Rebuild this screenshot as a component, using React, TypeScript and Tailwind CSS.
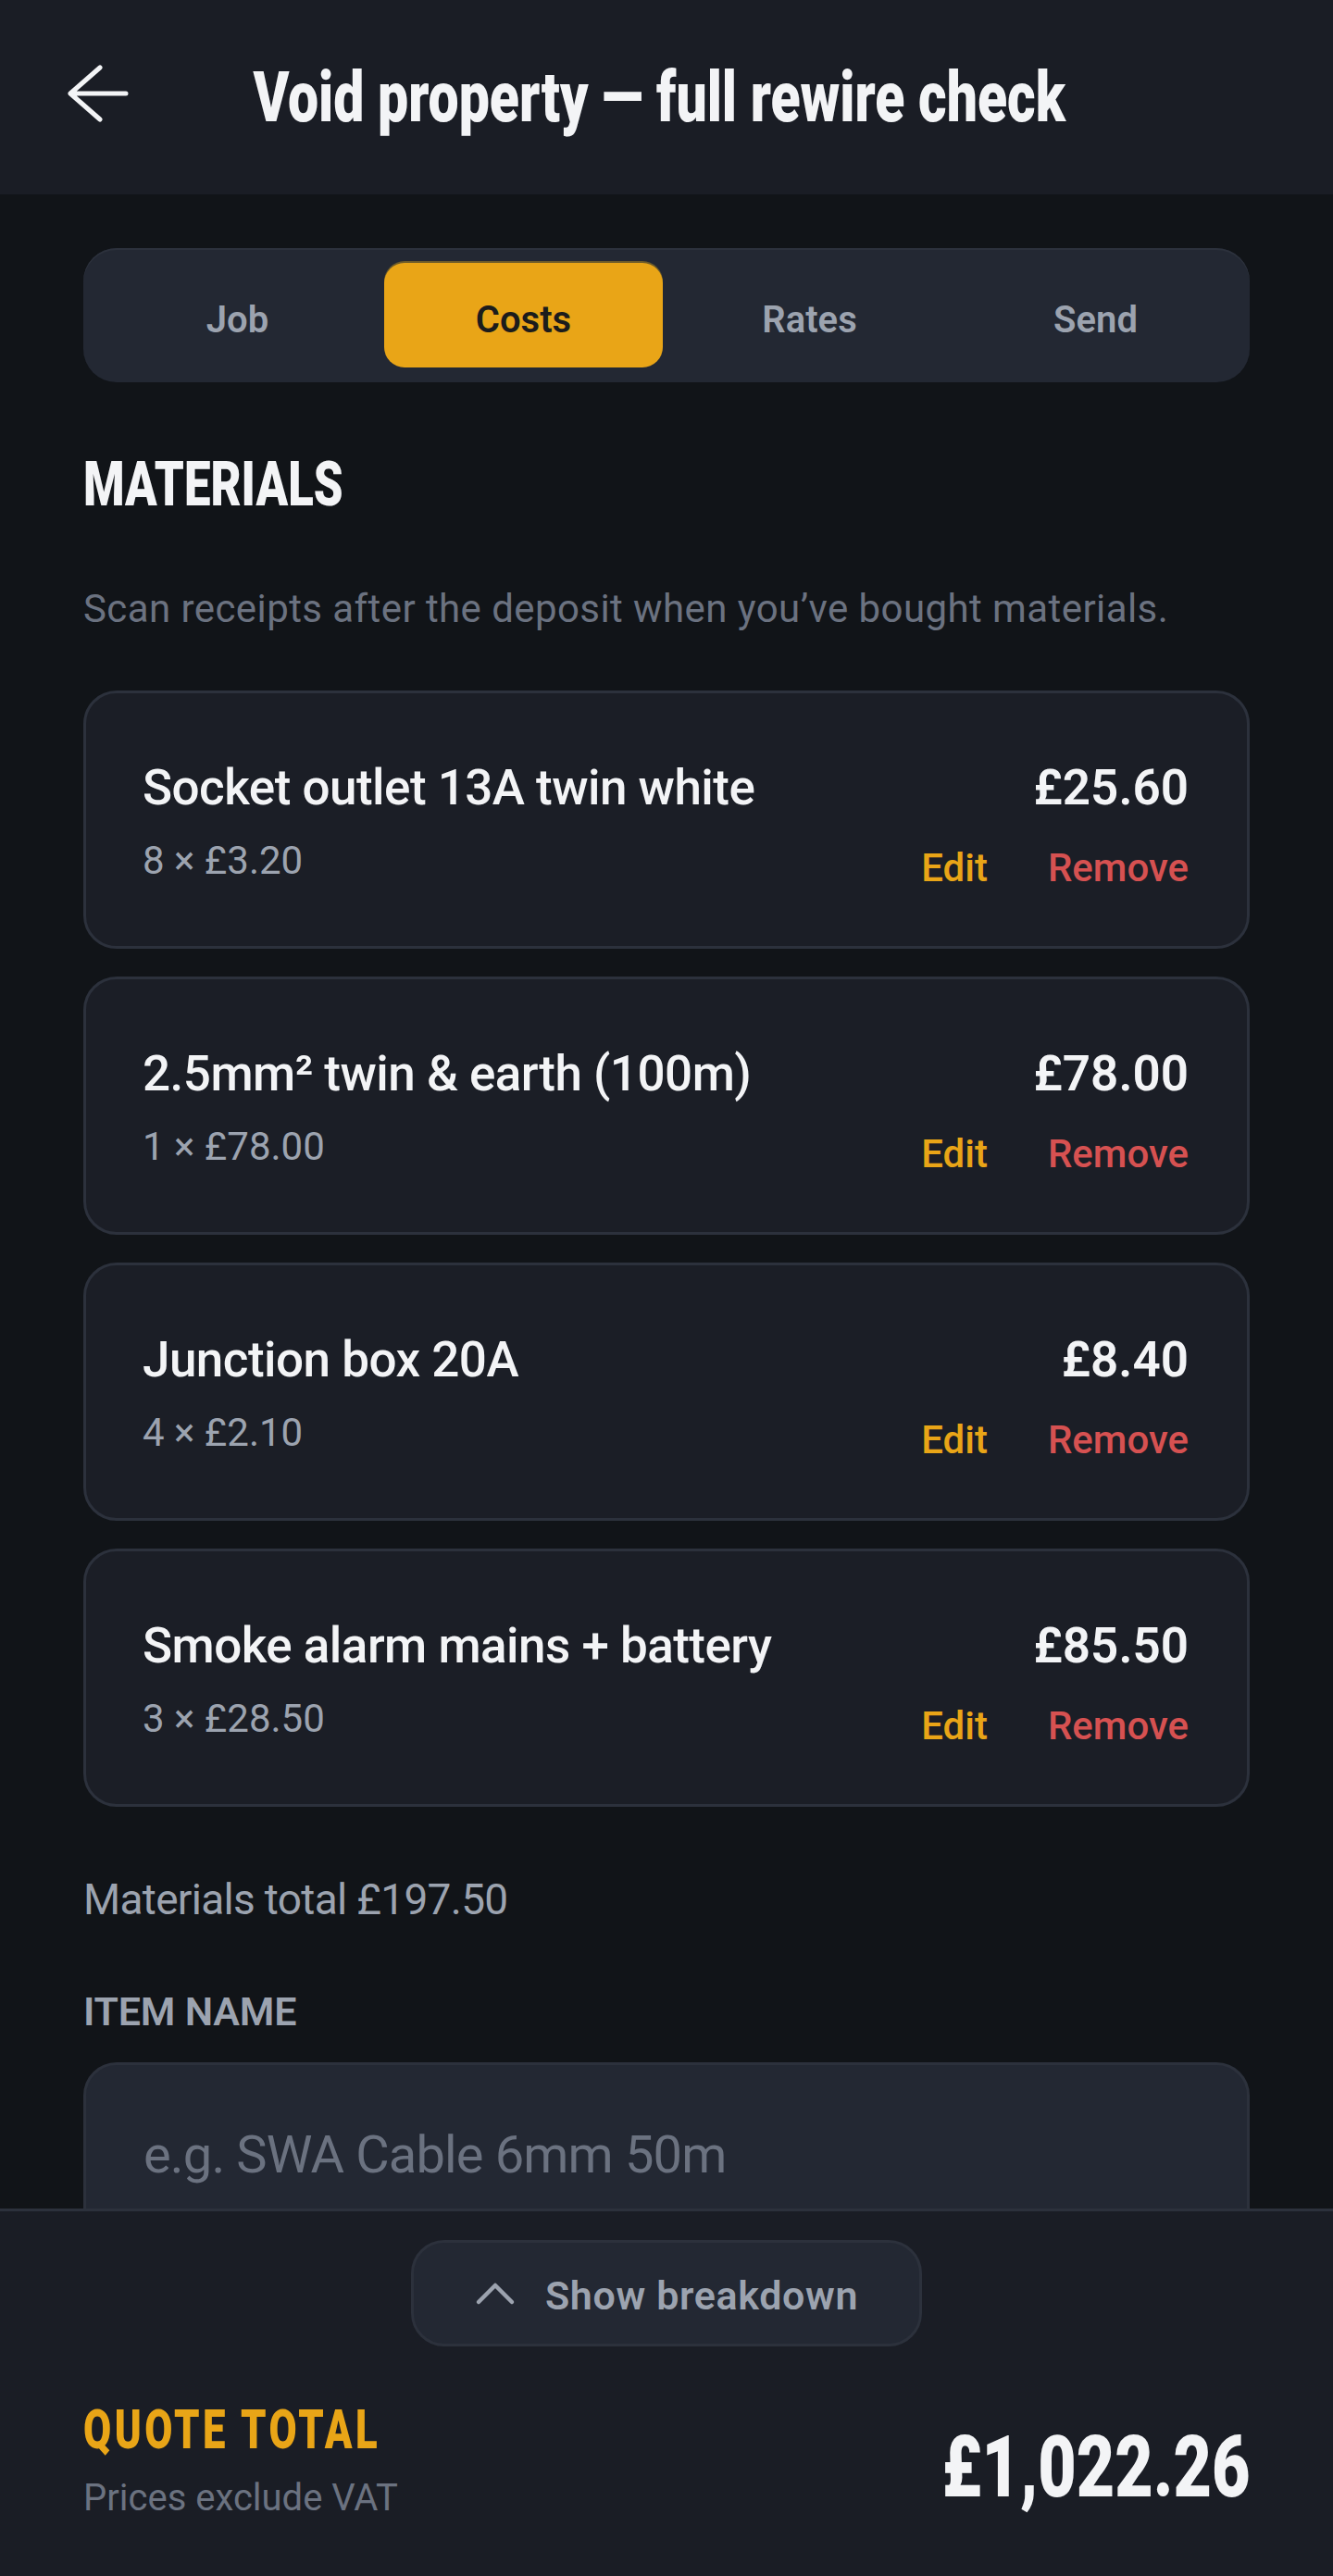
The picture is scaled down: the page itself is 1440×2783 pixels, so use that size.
import { useState } from "react";

const items = [
  { name: "Socket outlet 13A twin white", qty: "8 × £3.20", price: "£25.60" },
  { name: "2.5mm² twin & earth (100m)", qty: "1 × £78.00", price: "£78.00" },
  { name: "Junction box 20A", qty: "4 × £2.10", price: "£8.40" },
  { name: "Smoke alarm mains + battery", qty: "3 × £28.50", price: "£85.50" },
];

const tabs = ["Job", "Costs", "Rates", "Send"];

export default function App() {
  const [active, setActive] = useState("Costs");
  const [itemName, setItemName] = useState("");

  return (
    <div
      className="h-[2783px] flex flex-col overflow-hidden bg-[#111418] text-[#f3f4f6]"
      style={{ fontFamily: 'Roboto, "Noto Sans", sans-serif' }}
    >
      {/* header */}
      <header className="h-[210px] shrink-0 flex items-center pl-[73px] pr-[155px] bg-[#1a1d25]">
        <button className="w-[66px] h-[66px] -mt-[6px] shrink-0">
          <svg width="66" height="66" viewBox="0 0 66 66" fill="none" stroke="#f3f4f6" strokeWidth="5" strokeLinecap="round" strokeLinejoin="round">
            <path d="M3 32 L35 4 M3 32 L35 60 M3 32 H63" />
          </svg>
        </button>
        <h1 className="flex-1 text-center text-[76px] leading-[76px] font-black whitespace-nowrap">
          <span className="inline-block scale-x-[0.775]">Void property — full rewire check</span>
        </h1>
      </header>

      <main className="flex-1 overflow-hidden px-[90px]">
        {/* tabs */}
        <div className="mt-[58px] grid grid-cols-4 gap-2 p-4 rounded-[36px] bg-[#232833] shadow-[inset_0_2px_0_#2c313c]">
          {tabs.map((t) => (
            <button
              key={t}
              onClick={() => setActive(t)}
              className={
                t === active
                  ? "h-[113px] pt-[10px] rounded-[22px] bg-[#e9a517] text-[#1c1c1c] text-[40px] font-semibold shadow-[0_-2px_0_#6b5a2a]"
                  : "h-[113px] pt-[10px] rounded-[22px] text-[#9ca3af] text-[40px] font-semibold"
              }
            >
              {t}
            </button>
          ))}
        </div>

        <h2 className="mt-[77px] text-[67px] leading-[67px] font-black text-[#f3f4f6]">
          <span className="inline-block origin-left scale-x-[0.76]">MATERIALS</span>
        </h2>
        <p className="mt-[76px] text-[42px] leading-[50px] tracking-[0.01em] text-[#6b7280]">
          Scan receipts after the deposit when you’ve bought materials.
        </p>

        <div className="mt-[63px] flex flex-col gap-[30px]">
          {items.map((it) => (
            <div
              key={it.price}
              className="h-[279px] rounded-[36px] border-[3px] border-[#2c313c] bg-[#1b1e26] pt-[70px] pl-[61px] pr-[63px] flex justify-between items-start"
            >
              <div>
                <div className="text-[53px] leading-[64px] font-medium tracking-[-0.01em] text-[#f3f4f6]">{it.name}</div>
                <div className="mt-[22px] text-[42px] leading-[50px] text-[#9ca3af]">{it.qty}</div>
              </div>
              <div className="flex flex-col items-end">
                <div className="text-[53px] leading-[64px] font-semibold text-[#f3f4f6]">{it.price}</div>
                <div className="mt-[30px] flex gap-[65px] text-[42px] leading-[50px] font-medium">
                  <button className="text-[#e9a517]">Edit</button>
                  <button className="text-[#d65151]">Remove</button>
                </div>
              </div>
            </div>
          ))}
        </div>

        <p className="mt-[73px] text-[46px] leading-[54px] tracking-[-0.015em] text-[#9ca3af]">Materials total £197.50</p>

        <label className="block mt-[69px] text-[43px] leading-[50px] font-semibold tracking-[-0.005em] text-[#9ca3af]">
          ITEM NAME
        </label>
        <input
          value={itemName}
          onChange={(e) => setItemName(e.target.value)}
          placeholder="e.g. SWA Cable 6mm 50m"
          className="mt-[30px] w-full h-[200px] rounded-[36px] border-[3px] border-[#2c313c] bg-[#232833] pl-[62px] text-[56px] tracking-[-0.015em] text-[#f3f4f6] placeholder:text-[#6b7280] outline-none"
        />
      </main>

      {/* bottom bar */}
      <footer className="h-[397px] shrink-0 border-t-[3px] border-[#2c313c] bg-[#1a1d25] px-[90px] pt-[31px]">
        <div className="flex justify-center">
          <button className="w-[552px] h-[115px] pt-[6px] rounded-[36px] border-[3px] border-[#2c313c] bg-[#232833] flex items-center justify-center gap-[32px] text-[43px] font-semibold tracking-[0.015em] text-[#9ca3af]">
            <svg className="-mt-[6px]" width="44" height="26" viewBox="0 0 44 26" fill="none" stroke="#9ca3af" strokeWidth="4.5" strokeLinecap="round" strokeLinejoin="round">
              <path d="M4 22 L22 4 L40 22" />
            </svg>
            Show breakdown
          </button>
        </div>
        <div className="mt-[60px] flex justify-between items-start">
          <div>
            <div className="text-[59px] leading-[59px] font-black tracking-[0.08em] text-[#e9a517] whitespace-nowrap">
              <span className="inline-block origin-left scale-x-[0.74]">QUOTE TOTAL</span>
            </div>
            <div className="mt-[21px] text-[40px] leading-[48px] text-[#6b7280]">Prices exclude VAT</div>
          </div>
          <div className="mt-[25px] text-[93px] leading-[92px] font-black text-[#f3f4f6]">
            <span className="inline-block origin-right scale-x-[0.77]">£1,022.26</span>
          </div>
        </div>
      </footer>
    </div>
  );
}
